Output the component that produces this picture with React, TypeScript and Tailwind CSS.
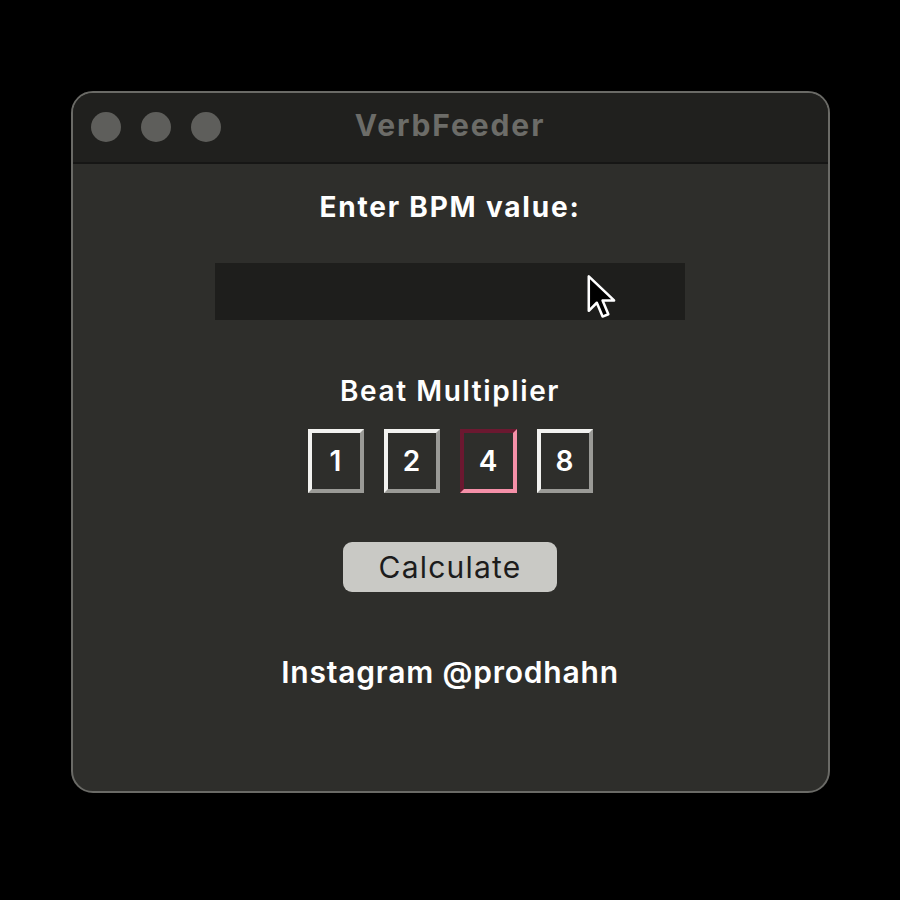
import React from "react";

function Cursor() {
  return (
    <svg width="32" height="46" viewBox="0 0 27 40" className="absolute left-[371px] top-[11px]">
      <path d="M2 2 L2 32 L9 25 L14 37 L19 35 L14 23 L24 23 Z" fill="#000" stroke="#fff" strokeWidth="2.2" strokeLinejoin="round" />
    </svg>
  );
}

function MultBox({ n, active }: { n: string; active?: boolean }) {
  return (
    <div
      className={
        active
          ? "w-[57px] h-[64px] flex items-center justify-center border-[4px] border-t-[#6b1830] border-l-[#6b1830] border-r-[#f590a8] border-b-[#f590a8] text-white text-[28px] font-semibold"
          : "w-[56px] h-[64px] flex items-center justify-center border-[4px] border-t-[#f2f2f0] border-l-[#f2f2f0] border-r-[#9a9a96] border-b-[#9a9a96] text-white text-[28px] font-semibold"
      }
    >
      {n}
    </div>
  );
}

export default function App() {
  return (
    <div className="w-[900px] h-[900px] bg-black flex items-start justify-center pt-[91px]" style={{ fontFamily: "Inter, 'Noto Sans', sans-serif" }}>
      <div className="w-[759px] h-[702px] rounded-[22px] border-[2px] border-[#6a6a66] bg-[#2e2e2b] overflow-hidden flex flex-col">
        <div className="h-[71px] bg-[#20201e] border-b-[2px] border-[#161615] relative flex items-center justify-center shrink-0">
          <div className="absolute left-[18px] top-[19px] flex gap-[20px]">
            <div className="w-[30px] h-[30px] rounded-full bg-[#5e5e5b]" />
            <div className="w-[30px] h-[30px] rounded-full bg-[#5e5e5b]" />
            <div className="w-[30px] h-[30px] rounded-full bg-[#5e5e5b]" />
          </div>
          <div className="text-[#6c6c68] text-[30px] font-bold tracking-[1.9px] -mt-[4px]">VerbFeeder</div>
        </div>
        <div className="flex flex-col items-center">
          <div className="mt-[25px] text-white text-[28px] font-bold tracking-[1.8px] leading-[36px]">Enter BPM value:</div>
          <div className="mt-[38px] w-[470px] h-[57px] bg-[#1e1e1c] relative">
            <Cursor />
          </div>
          <div className="mt-[52px] text-white text-[28px] font-semibold tracking-[1.6px] leading-[38px]">Beat Multiplier</div>
          <div className="mt-[19px] flex gap-[20px]">
            <MultBox n="1" />
            <MultBox n="2" />
            <MultBox n="4" active />
            <MultBox n="8" />
          </div>
          <div className="mt-[49px] w-[214px] h-[50px] rounded-[9px] bg-[#c9c9c5] flex items-center justify-center text-[#1c1c1c] text-[30px] tracking-[1.2px]">
            Calculate
          </div>
          <div className="mt-[61px] text-white text-[30px] font-semibold tracking-[0.8px] leading-[38px]">Instagram @prodhahn</div>
        </div>
      </div>
    </div>
  );
}
